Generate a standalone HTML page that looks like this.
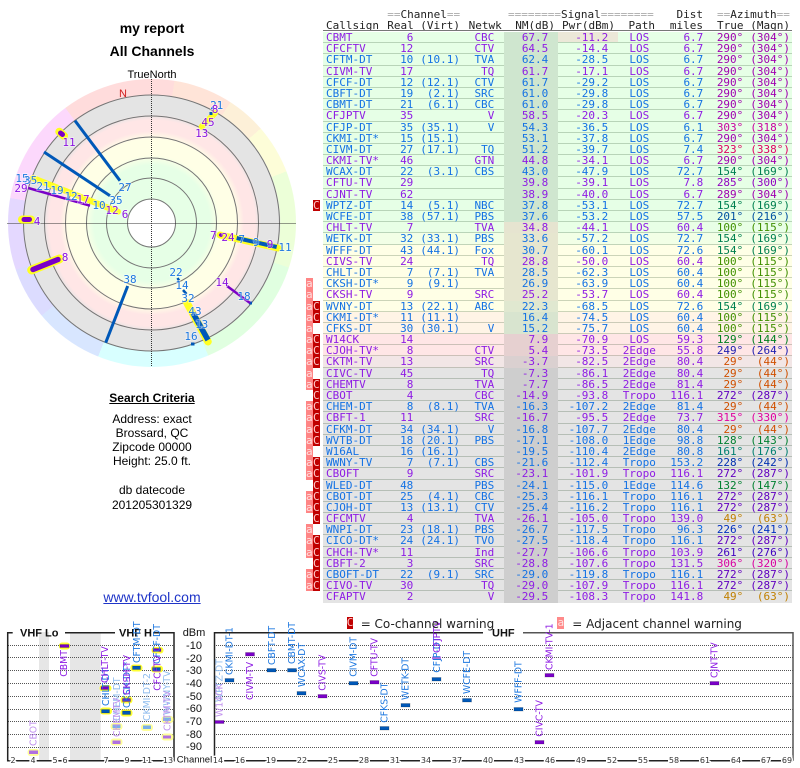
<!DOCTYPE html>
<html><head><meta charset="utf-8"><title>my report</title>
<style>
html,body{margin:0;padding:0;background:#fff}
body{position:relative;width:800px;height:768px;overflow:hidden;font-family:"Liberation Sans",sans-serif}
.t{position:absolute;left:0;width:304px;text-align:center;color:#000}
#disc{position:absolute;left:7.5px;top:79px;width:288px;height:288px;border-radius:50%;
background:radial-gradient(circle at center,#fff 0,#fff 23.5px,#e6ffe6 24px,#e6ffe6 58px,#ffffe6 68px,#ffffe6 84px,#ffe6e6 92px,#ffe6e6 103px,#e4e4e4 109px,#e4e4e4 128px,rgba(255,255,255,0) 128.5px),
conic-gradient(#ffdcdc 0 9deg,#ffe4d8 9deg 33deg,#fdf0d8 33deg 49deg,#fdfdd8 49deg 69deg,#ecffd8 69deg 108deg,#e0ffe0 108deg 157deg,#d8ffff 157deg 202deg,#d8e6ff 202deg 230deg,#dcdcff 230deg 251deg,#e4d8ff 251deg 280deg,#fcd8fc 280deg 323deg,#ffdcdc 323deg)}
svg{position:absolute;left:0;top:0}
.sf{filter:blur(.3px)}
.h{position:absolute;font:11px/11px "DejaVu Sans Mono",monospace;color:#222;white-space:pre;filter:blur(.25px)}
.h em{font-style:normal;color:#aaa}
#hl{position:absolute;left:323px;width:469px;top:30px;height:1px;background:#777}
#tb{position:absolute;left:323px;top:32px;width:469px;font:11px/11px "DejaVu Sans Mono",monospace;filter:blur(.25px)}
.r{position:relative;height:11.2px;box-sizing:border-box;background:var(--b);border-bottom:1px solid rgba(0,40,0,.2);color:#1472e4}
.r.p{color:#8e1ce4}
.r::before{content:"";position:absolute;left:181px;width:54px;top:0;height:11.2px;background:var(--n)}
.r i{position:absolute;top:0;font-style:normal;white-space:pre}
.r i:nth-of-type(1){left:3px}
.r i:nth-of-type(2){right:378.7px}
.r i:nth-of-type(3){right:332px}
.r i:nth-of-type(4){right:297.7px}
.r i:nth-of-type(5){right:243.7px}
.r i:nth-of-type(6){right:183.7px}
.r i:nth-of-type(7){left:286.3px;width:60px;text-align:center}
.r i:nth-of-type(8){right:88.7px}
.r i:nth-of-type(9){right:48.7px;color:var(--a)}
.r i:nth-of-type(10){right:2px;color:var(--a)}
.r u,.r b{position:absolute;top:0;height:11.2px;text-decoration:none;font-weight:normal;text-align:center;overflow:hidden}
.r u{left:-17px;width:6.7px;background:#ff8585;color:#ffe0e0}
.r b{left:-10.3px;width:7.3px;background:#c00000;color:#ffc8c8}
.g{--b:#e6ffe6;--n:#cfe6cf}
.h1{--b:#e8ffe6;--n:#e6e4d0}
.h2{--b:#f2ffe6;--n:#e6e6cf}
.y{--b:#ffffe6;--n:#e6e6cf}
.y2{--b:#ffffe6;--n:#e0e8d0}
.o{--b:#fff4e6;--n:#d8e4cf}
.k{--b:#ffe6e6;--n:#e6d0d0}
.m{--b:#f2e6e6;--n:#dad0d0}
.e{--b:#e4e4e4;--n:#cecece}
#leg{position:absolute;top:617px;left:0;width:800px;height:14px;font:12px/14px "DejaVu Sans",sans-serif;color:#222;filter:blur(.2px)}
#leg span{position:absolute;white-space:pre}
#leg .x{top:0;height:12px;font:11px/12px "DejaVu Sans Mono",monospace;text-align:center}
</style></head><body>

<div class="t" style="top:20px;font:bold 14px/16px 'Liberation Sans',sans-serif">my report</div>
<div class="t" style="top:43px;font:bold 14px/16px 'Liberation Sans',sans-serif">All Channels</div>
<div class="t" style="top:69px;font:11px/13px 'Liberation Sans',sans-serif">TrueNorth</div>
<div id="disc"></div>

<svg width="800" height="768" viewBox="0 0 800 768" xmlns="http://www.w3.org/2000/svg">
<g fill="none" stroke="#757575" stroke-width="1">
<circle cx="151.5" cy="223" r="24"/><circle cx="151.5" cy="223" r="45"/><circle cx="151.5" cy="223" r="65"/><circle cx="151.5" cy="223" r="86"/><circle cx="151.5" cy="223" r="107"/><circle cx="151.5" cy="223" r="128"/>
</g>
<g stroke="#333" stroke-width="1" stroke-dasharray="1 1">
<line x1="7.5" y1="223.5" x2="296" y2="223.5"/><line x1="151.5" y1="79" x2="151.5" y2="367"/>
</g>
<text x="123" y="97" font-family="Liberation Sans" font-size="11" fill="#d02020" text-anchor="middle">N</text>
<g stroke-linecap="round" fill="none">
<line x1="33" y1="178" x2="118" y2="211.7" stroke="#ffff22" stroke-width="6"/>
<line x1="201.7" y1="126.7" x2="215" y2="113" stroke="#ffff22" stroke-width="6"/>
<line x1="220" y1="235" x2="278" y2="248" stroke="#ffff22" stroke-width="7"/>
<line x1="187" y1="303" x2="208" y2="341.7" stroke="#ffff22" stroke-width="7.5"/>
<line x1="59.3" y1="131.7" x2="64" y2="136" stroke="#ffff22" stroke-width="8"/>
<line x1="31.7" y1="270" x2="59.3" y2="259" stroke="#ffff22" stroke-width="9"/>
<line x1="22" y1="219.5" x2="31" y2="219.5" stroke="#ffff22" stroke-width="8"/>
<g stroke="#0058b8" stroke-linecap="butt">
<line x1="75" y1="120.7" x2="120" y2="180.7" stroke-width="3"/>
<line x1="44" y1="152" x2="110" y2="195.7" stroke-width="3"/>
<line x1="127.7" y1="286" x2="105.7" y2="342.7" stroke-width="3"/>
<line x1="236.7" y1="238" x2="276.7" y2="247" stroke-width="4"/>
<line x1="193" y1="313" x2="208" y2="340" stroke-width="5.5"/>
<line x1="177.5" y1="278" x2="179" y2="280.5" stroke-width="2.5"/>
<line x1="183" y1="290" x2="186.5" y2="294" stroke-width="2.5"/>
<line x1="209.5" y1="113.5" x2="212.5" y2="113.5" stroke-width="3"/>
<line x1="191" y1="344" x2="194.5" y2="344" stroke-width="3"/>
<line x1="249" y1="303" x2="252" y2="303" stroke-width="3"/>
</g>
<g stroke="#7a00c8" stroke-linecap="butt">
<line x1="28.3" y1="188" x2="90" y2="205.7" stroke-width="2.5"/>
<line x1="227" y1="286" x2="250" y2="303" stroke-width="2.5"/>
</g>
<g stroke="#7a00c8">
<line x1="60.5" y1="133" x2="62.5" y2="134.5" stroke-width="5"/>
<line x1="33" y1="269.5" x2="58" y2="259.5" stroke-width="5.5"/>
<line x1="24" y1="219.5" x2="29.5" y2="219.5" stroke-width="5"/>
<line x1="220.7" y1="235" x2="221" y2="235.2" stroke-width="3.5"/>
</g>
</g>
<g class="sf" font-family="DejaVu Sans Mono" font-size="11" text-anchor="middle" paint-order="stroke" stroke="#fff" stroke-opacity=".5" stroke-width="1.5" fill="#1e78e0">
<text x="125" y="191">27</text><text x="116" y="204">35</text>
<text x="22" y="182">15</text><text x="30.6" y="184">35</text><text x="43" y="190">21</text><text x="57" y="194">19</text><text x="71" y="200">12</text><text x="99" y="209">10</text>
<text x="216.7" y="109">21</text>
<text x="130" y="283">38</text>
<text x="241.7" y="243">7</text><text x="256" y="246">9</text><text x="285" y="251">11</text>
<text x="176" y="276">22</text><text x="182" y="289">14</text><text x="188" y="302">32</text><text x="195" y="315">43</text><text x="201.7" y="328">13</text>
<text x="244" y="300">18</text><text x="191" y="340">16</text>
</g>
<g class="sf" font-family="DejaVu Sans Mono" font-size="11" text-anchor="middle" paint-order="stroke" stroke="#fff" stroke-opacity=".5" stroke-width="1.5" fill="#8a14e0">
<text x="69" y="146">11</text><text x="21" y="192">29</text><text x="83" y="203">17</text><text x="112" y="214">12</text><text x="125" y="218">6</text><text x="37" y="225">4</text>
<text x="215" y="113">8</text><text x="208" y="126">45</text><text x="201.7" y="137">13</text>
<text x="65" y="261">8</text>
<text x="213.3" y="239">7</text><text x="228" y="241">24</text><text x="270" y="248">9</text>
<text x="222" y="286">14</text>
</g>

<!-- bottom charts -->
<rect x="39" y="632" width="10" height="128" fill="#e6e6e6"/>
<rect x="70" y="632" width="30.7" height="128" fill="#e6e6e6"/>
<g stroke="#555" stroke-width="1" stroke-dasharray="1 1">
<line x1="8" x2="174" y1="645.5" y2="645.5"/><line x1="8" x2="174" y1="657.5" y2="657.5"/><line x1="8" x2="174" y1="670.5" y2="670.5"/><line x1="8" x2="174" y1="683.5" y2="683.5"/><line x1="8" x2="174" y1="696.5" y2="696.5"/><line x1="8" x2="174" y1="709.5" y2="709.5"/><line x1="8" x2="174" y1="721.5" y2="721.5"/><line x1="8" x2="174" y1="734.5" y2="734.5"/><line x1="8" x2="174" y1="747.5" y2="747.5"/>
<line x1="214" x2="793" y1="645.5" y2="645.5"/><line x1="214" x2="793" y1="657.5" y2="657.5"/><line x1="214" x2="793" y1="670.5" y2="670.5"/><line x1="214" x2="793" y1="683.5" y2="683.5"/><line x1="214" x2="793" y1="696.5" y2="696.5"/><line x1="214" x2="793" y1="709.5" y2="709.5"/><line x1="214" x2="793" y1="721.5" y2="721.5"/><line x1="214" x2="793" y1="734.5" y2="734.5"/><line x1="214" x2="793" y1="747.5" y2="747.5"/>
</g>
<g stroke="#222" stroke-width="1.5" fill="none">
<path d="M12.7 632.7H7.7V760.7H174V632.7H153"/>
<path d="M65 632.7H115"/>
<path d="M483 632.7H214.5V760.7H793"/>
<path d="M523 632.7H793V760.7" stroke="#555"/>
</g>
<g font-family="Liberation Sans" font-size="11" font-weight="bold" fill="#111">
<text x="20" y="636.5">VHF Lo</text><text x="119" y="636.5">VHF H</text><text x="492" y="636.5">UHF</text>
</g>
<g font-family="Liberation Sans" font-size="11" fill="#111" text-anchor="middle">
<text x="194" y="636">dBm</text>
<text x="194" y="649">-10</text><text x="194" y="662">-20</text><text x="194" y="674">-30</text><text x="194" y="687">-40</text><text x="194" y="700">-50</text><text x="194" y="712">-60</text><text x="194" y="725">-70</text><text x="194" y="738">-80</text><text x="194" y="750">-90</text>
<text x="194.5" y="762.5" font-size="9.5">Channel</text>
</g>
<g font-family="DejaVu Sans" font-size="8" fill="#333" text-anchor="middle" paint-order="stroke" stroke="#fff" stroke-width="3">
<text x="13" y="763">2</text><text x="33" y="763">4</text><text x="55" y="763">5</text><text x="65" y="763">6</text><text x="106" y="763">7</text><text x="127" y="763">9</text><text x="147" y="763">11</text><text x="168" y="763">13</text>
<text x="218" y="763">14</text><text x="240" y="763">16</text><text x="271" y="763">19</text><text x="302" y="763">22</text><text x="333" y="763">25</text><text x="364" y="763">28</text><text x="395" y="763">31</text><text x="426" y="763">34</text><text x="457" y="763">37</text><text x="488" y="763">40</text><text x="519" y="763">43</text><text x="550" y="763">46</text><text x="581" y="763">49</text><text x="612" y="763">52</text><text x="643" y="763">55</text><text x="674" y="763">58</text><text x="705" y="763">61</text><text x="736" y="763">64</text><text x="766" y="763">67</text><text x="787" y="763">69</text>
</g>
<!-- halos -->
<g fill="#ffff33">
<rect x="100" y="707.5" width="12" height="7" rx="3"/>
<rect x="59" y="642.5" width="11" height="7" rx="3"/>
<rect x="99.5" y="685" width="12" height="6.5" rx="3"/>
<rect x="120.5" y="696.5" width="12" height="7" rx="3"/>
<rect x="120.5" y="709.5" width="12" height="7" rx="3"/>
<rect x="130.5" y="664.5" width="12" height="7" rx="3"/>
<rect x="151" y="665.5" width="12" height="7" rx="3"/>
<rect x="151.5" y="647" width="12" height="6.5" rx="3"/>
</g>
<g fill="#ffff99">
<rect x="27.5" y="749" width="12" height="7" rx="3"/>
<rect x="110.5" y="723" width="12" height="7" rx="3"/>
<rect x="110.5" y="738.5" width="12" height="7" rx="3"/>
<rect x="141" y="724" width="12" height="7" rx="3"/>
<rect x="161.5" y="716" width="12" height="7" rx="3"/>
<rect x="161.5" y="733.5" width="12" height="7" rx="3"/>
</g>
<!-- markers -->
<g fill="#0058b8" stroke="rgba(0,0,0,.18)" stroke-width="1">
<rect x="101.5" y="709.5" width="8" height="3.5"/><rect x="122.5" y="711" width="8" height="3.5"/><rect x="132.5" y="666" width="8" height="3.5"/><rect x="152.5" y="667.5" width="8" height="3.5"/>
<rect x="225" y="678.5" width="9" height="3.5"/><rect x="267" y="668.5" width="9" height="3.5"/><rect x="287.5" y="668.5" width="9" height="3.5"/><rect x="297" y="691.5" width="9" height="3.5"/><rect x="349" y="681.5" width="9" height="3.5"/><rect x="380" y="726.5" width="9" height="3.5"/><rect x="401" y="703.5" width="9" height="3.5"/><rect x="432" y="677.5" width="9" height="3.5"/><rect x="462.5" y="698.5" width="9" height="3.5"/><rect x="514" y="707.5" width="9" height="3.5"/>
</g>
<g fill="#7a00c8" stroke="rgba(0,0,0,.18)" stroke-width="1">
<rect x="60" y="644.5" width="9" height="3"/><rect x="101" y="686.5" width="8" height="3"/><rect x="122.5" y="698.5" width="8" height="3"/><rect x="153" y="648.5" width="8" height="3"/>
<rect x="215" y="720.5" width="9" height="3"/><rect x="245.5" y="652.5" width="9" height="3.5"/><rect x="318" y="694.5" width="9" height="3.5"/><rect x="370" y="680.5" width="9" height="3.5"/><rect x="535" y="740.5" width="9" height="3.5"/><rect x="545" y="673.5" width="9" height="3.5"/><rect x="710" y="681.5" width="9" height="3.5"/>
</g>
<g fill="#7ab0e8">
<rect x="112.5" y="724.5" width="8" height="3.5"/><rect x="143" y="725.5" width="8" height="3.5"/><rect x="163" y="717.5" width="8" height="3.5"/>
</g>
<g fill="#b070e0">
<rect x="29" y="750.5" width="9" height="3.5"/><rect x="112.5" y="740.5" width="8" height="3.5"/><rect x="163" y="735.5" width="8" height="3"/><rect x="432" y="656.5" width="9" height="3"/>
</g>
<!-- rotated labels -->
<g class="sf" font-family="DejaVu Sans" font-size="9.3" fill="#1e78e0">
<text transform="translate(109,706) rotate(-90)">CHLT-DT</text>
<text transform="translate(130,708) rotate(-90)">CKSH-DT*</text>
<text transform="translate(140,663) rotate(-90)">CFTM-DT</text>
<text transform="translate(160,664) rotate(-90)">CFCF-DT</text>
<text transform="translate(232.5,675) rotate(-90)">CKMI-DT-1</text>
<text transform="translate(275,665) rotate(-90)">CBFT-DT</text>
<text transform="translate(295,664) rotate(-90)">CBMT-DT</text>
<text transform="translate(305,687) rotate(-90)">WCAX-DT</text>
<text transform="translate(356.5,676.7) rotate(-90)">CIVM-DT</text>
<text transform="translate(387.5,722.7) rotate(-90)">CFKS-DT</text>
<text transform="translate(408.5,700) rotate(-90)">WETK-DT</text>
<text transform="translate(440,672.7) rotate(-90)">CFJP-DT</text>
<text transform="translate(470,694) rotate(-90)">WCFE-DT</text>
<text transform="translate(521.5,702.7) rotate(-90)">WFFF-DT</text>
</g>
<g class="sf" font-family="DejaVu Sans" font-size="9.3" fill="#8e1ce4">
<text transform="translate(67,676.7) rotate(-90)">CBMT</text>
<text transform="translate(108,683) rotate(-90)">CHLT-TV</text>
<text transform="translate(130,695) rotate(-90)">CKSH-TV</text>
<text transform="translate(160.5,690.7) rotate(-90)">CFCFTV</text>
<text transform="translate(253,700) rotate(-90)">CIVM-TV</text>
<text transform="translate(325.5,690.7) rotate(-90)">CIVS-TV</text>
<text transform="translate(377.5,676.7) rotate(-90)">CFTU-TV</text>
<text transform="translate(440,653) rotate(-90)">CFJPTV</text>
<text transform="translate(542.5,736.7) rotate(-90)">CIVC-TV</text>
<text transform="translate(552.5,670) rotate(-90)">CKMI-TV-1</text>
<text transform="translate(717.5,678) rotate(-90)">CJNT-TV</text>
</g>
<g class="sf" font-family="DejaVu Sans" font-size="9.3" fill="#8fbcee">
<text transform="translate(120,721) rotate(-90)">CHEM-DT</text>
<text transform="translate(150,721) rotate(-90)">CKMI-DT-2</text>
<text transform="translate(170,715) rotate(-90)">WWNY-TV</text>
<text transform="translate(222.5,702) rotate(-90)">WPTZ-DT</text>
</g>
<g class="sf" font-family="DejaVu Sans" font-size="9.3" fill="#c090ee">
<text transform="translate(36.5,746) rotate(-90)">CBOT</text>
<text transform="translate(120,737) rotate(-90)">CHEMTV</text>
<text transform="translate(170.5,731) rotate(-90)">CKTM-TV</text>
<text transform="translate(222.5,717) rotate(-90)">W14CK</text>
</g>
</svg>

<div class="t" style="top:391px;font:bold 12px/14px 'Liberation Sans',sans-serif;text-decoration:underline">Search Criteria</div>
<div class="t" style="top:412px;font:12px/14px 'Liberation Sans',sans-serif">Address: exact</div>
<div class="t" style="top:426px;font:12px/14px 'Liberation Sans',sans-serif">Brossard, QC</div>
<div class="t" style="top:440px;font:12px/14px 'Liberation Sans',sans-serif">Zipcode 00000</div>
<div class="t" style="top:454px;font:12px/14px 'Liberation Sans',sans-serif">Height: 25.0 ft.</div>
<div class="t" style="top:483px;font:12px/14px 'Liberation Sans',sans-serif">db datecode</div>
<div class="t" style="top:498px;font:12px/14px 'Liberation Sans',sans-serif">201205301329</div>
<div class="t" style="top:589px;font:14px/16px 'Liberation Sans',sans-serif;color:#1f35c8;text-decoration:underline">www.tvfool.com</div>

<div class="h" style="left:387.3px;top:9px"><em>==</em>Channel<em>==</em></div>
<div class="h" style="left:508px;top:9px"><em>========</em>Signal<em>========</em></div>
<div class="h" style="right:97px;top:9px">Dist</div>
<div class="h" style="left:717px;top:9px"><em>==</em>Azimuth<em>==</em></div>
<div class="h" style="left:326px;top:20px">Callsign</div>
<div class="h" style="left:387.3px;top:20px">Real</div>
<div class="h" style="right:340px;top:20px">(Virt)</div>
<div class="h" style="right:298.3px;top:20px">Netwk</div>
<div class="h" style="right:245px;top:20px">NM(dB)</div>
<div class="h" style="right:185px;top:20px">Pwr(dBm)</div>
<div class="h" style="right:145px;top:20px">Path</div>
<div class="h" style="right:97px;top:20px">miles</div>
<div class="h" style="left:717px;top:20px">True</div>
<div class="h" style="right:10px;top:20px">(Magn)</div>
<div id="hl"></div>

<div id="tb">
<div class="r g p" style="--a:#a000b0"><i>CBMT</i><i>6</i><i></i><i>CBC</i><i>67.7</i><i style="background:#ece8d8;padding:0 9.7px 0 17.3px;right:174px;height:10px">-11.2</i><i>LOS</i><i>6.7</i><i>290°</i><i>(304°)</i></div>
<div class="r g p" style="--a:#a000b0"><i>CFCFTV</i><i>12</i><i></i><i>CTV</i><i>64.5</i><i>-14.4</i><i>LOS</i><i>6.7</i><i>290°</i><i>(304°)</i></div>
<div class="r g" style="--a:#a000b0"><i>CFTM-DT</i><i>10</i><i>(10.1)</i><i>TVA</i><i>62.4</i><i>-28.5</i><i>LOS</i><i>6.7</i><i>290°</i><i>(304°)</i></div>
<div class="r g p" style="--a:#a000b0"><i>CIVM-TV</i><i>17</i><i></i><i>TQ</i><i>61.7</i><i>-17.1</i><i>LOS</i><i>6.7</i><i>290°</i><i>(304°)</i></div>
<div class="r g" style="--a:#a000b0"><i>CFCF-DT</i><i>12</i><i>(12.1)</i><i>CTV</i><i>61.7</i><i>-29.2</i><i>LOS</i><i>6.7</i><i>290°</i><i>(304°)</i></div>
<div class="r g" style="--a:#a000b0"><i>CBFT-DT</i><i>19</i><i>(2.1)</i><i>SRC</i><i>61.0</i><i>-29.8</i><i>LOS</i><i>6.7</i><i>290°</i><i>(304°)</i></div>
<div class="r g" style="--a:#a000b0"><i>CBMT-DT</i><i>21</i><i>(6.1)</i><i>CBC</i><i>61.0</i><i>-29.8</i><i>LOS</i><i>6.7</i><i>290°</i><i>(304°)</i></div>
<div class="r g p" style="--a:#a000b0"><i>CFJPTV</i><i>35</i><i></i><i>V</i><i>58.5</i><i>-20.3</i><i>LOS</i><i>6.7</i><i>290°</i><i>(304°)</i></div>
<div class="r g" style="--a:#c800a0"><i>CFJP-DT</i><i>35</i><i>(35.1)</i><i>V</i><i>54.3</i><i>-36.5</i><i>LOS</i><i>6.1</i><i>303°</i><i>(318°)</i></div>
<div class="r g" style="--a:#a000b0"><i>CKMI-DT*</i><i>15</i><i>(15.1)</i><i></i><i>53.1</i><i>-37.8</i><i>LOS</i><i>6.7</i><i>290°</i><i>(304°)</i></div>
<div class="r g" style="--a:#e00060"><i>CIVM-DT</i><i>27</i><i>(17.1)</i><i>TQ</i><i>51.2</i><i>-39.7</i><i>LOS</i><i>7.4</i><i>323°</i><i>(338°)</i></div>
<div class="r g p" style="--a:#a000b0"><i>CKMI-TV*</i><i>46</i><i></i><i>GTN</i><i>44.8</i><i>-34.1</i><i>LOS</i><i>6.7</i><i>290°</i><i>(304°)</i></div>
<div class="r g" style="--a:#008050"><i>WCAX-DT</i><i>22</i><i>(3.1)</i><i>CBS</i><i>43.0</i><i>-47.9</i><i>LOS</i><i>72.7</i><i>154°</i><i>(169°)</i></div>
<div class="r g p" style="--a:#9000c0"><i>CFTU-TV</i><i>29</i><i></i><i></i><i>39.8</i><i>-39.1</i><i>LOS</i><i>7.8</i><i>285°</i><i>(300°)</i></div>
<div class="r g p" style="--a:#a000b0"><i>CJNT-TV</i><i>62</i><i></i><i></i><i>38.9</i><i>-40.0</i><i>LOS</i><i>6.7</i><i>289°</i><i>(304°)</i></div>
<div class="r g" style="--a:#008050"><i>WPTZ-DT</i><i>14</i><i>(5.1)</i><i>NBC</i><i>37.8</i><i>-53.1</i><i>LOS</i><i>72.7</i><i>154°</i><i>(169°)</i><b>C</b></div>
<div class="r g" style="--a:#0050a0"><i>WCFE-DT</i><i>38</i><i>(57.1)</i><i>PBS</i><i>37.6</i><i>-53.2</i><i>LOS</i><i>57.5</i><i>201°</i><i>(216°)</i></div>
<div class="r h1 p" style="--a:#409000"><i>CHLT-TV</i><i>7</i><i></i><i>TVA</i><i>34.8</i><i>-44.1</i><i>LOS</i><i>60.4</i><i>100°</i><i>(115°)</i></div>
<div class="r h2" style="--a:#008050"><i>WETK-DT</i><i>32</i><i>(33.1)</i><i>PBS</i><i>33.6</i><i>-57.2</i><i>LOS</i><i>72.7</i><i>154°</i><i>(169°)</i></div>
<div class="r y" style="--a:#008050"><i>WFFF-DT</i><i>43</i><i>(44.1)</i><i>Fox</i><i>30.7</i><i>-60.1</i><i>LOS</i><i>72.6</i><i>154°</i><i>(169°)</i></div>
<div class="r y p" style="--a:#409000"><i>CIVS-TV</i><i>24</i><i></i><i>TQ</i><i>28.8</i><i>-50.0</i><i>LOS</i><i>60.4</i><i>100°</i><i>(115°)</i></div>
<div class="r y" style="--a:#409000"><i>CHLT-DT</i><i>7</i><i>(7.1)</i><i>TVA</i><i>28.5</i><i>-62.3</i><i>LOS</i><i>60.4</i><i>100°</i><i>(115°)</i></div>
<div class="r y" style="--a:#409000"><i>CKSH-DT*</i><i>9</i><i>(9.1)</i><i></i><i>26.9</i><i>-63.9</i><i>LOS</i><i>60.4</i><i>100°</i><i>(115°)</i><u>a</u></div>
<div class="r y p" style="--a:#409000"><i>CKSH-TV</i><i>9</i><i></i><i>SRC</i><i>25.2</i><i>-53.7</i><i>LOS</i><i>60.4</i><i>100°</i><i>(115°)</i><u>a</u></div>
<div class="r y2" style="--a:#008050"><i>WVNY-DT</i><i>13</i><i>(22.1)</i><i>ABC</i><i>22.3</i><i>-68.5</i><i>LOS</i><i>72.6</i><i>154°</i><i>(169°)</i><u>a</u><b>C</b></div>
<div class="r o" style="--a:#409000"><i>CKMI-DT*</i><i>11</i><i>(11.1)</i><i></i><i>16.4</i><i>-74.5</i><i>LOS</i><i>60.4</i><i>100°</i><i>(115°)</i><u>a</u><b>C</b></div>
<div class="r o" style="--a:#409000"><i>CFKS-DT</i><i>30</i><i>(30.1)</i><i>V</i><i>15.2</i><i>-75.7</i><i>LOS</i><i>60.4</i><i>100°</i><i>(115°)</i><u>a</u></div>
<div class="r k p" style="--a:#008020"><i>W14CK</i><i>14</i><i></i><i></i><i>7.9</i><i>-70.9</i><i>LOS</i><i>59.3</i><i>129°</i><i>(144°)</i><u>a</u><b>C</b></div>
<div class="r k p" style="--a:#2020b0"><i>CJOH-TV*</i><i>8</i><i></i><i>CTV</i><i>5.4</i><i>-73.5</i><i>2Edge</i><i>55.8</i><i>249°</i><i>(264°)</i><u>a</u><b>C</b></div>
<div class="r m p" style="--a:#d05000"><i>CKTM-TV</i><i>13</i><i></i><i>SRC</i><i>-3.7</i><i>-82.5</i><i>2Edge</i><i>80.4</i><i>29°</i><i>(44°)</i><u>a</u><b>C</b></div>
<div class="r e p" style="--a:#d05000"><i>CIVC-TV</i><i>45</i><i></i><i>TQ</i><i>-7.3</i><i>-86.1</i><i>2Edge</i><i>80.4</i><i>29°</i><i>(44°)</i><u>a</u></div>
<div class="r e p" style="--a:#d05000"><i>CHEMTV</i><i>8</i><i></i><i>TVA</i><i>-7.7</i><i>-86.5</i><i>2Edge</i><i>81.4</i><i>29°</i><i>(44°)</i><u>a</u><b>C</b></div>
<div class="r e p" style="--a:#6000c0"><i>CBOT</i><i>4</i><i></i><i>CBC</i><i>-14.9</i><i>-93.8</i><i>Tropo</i><i>116.1</i><i>272°</i><i>(287°)</i><b>C</b></div>
<div class="r e" style="--a:#d05000"><i>CHEM-DT</i><i>8</i><i>(8.1)</i><i>TVA</i><i>-16.3</i><i>-107.2</i><i>2Edge</i><i>81.4</i><i>29°</i><i>(44°)</i><u>a</u><b>C</b></div>
<div class="r e p" style="--a:#e000a0"><i>CBFT-1</i><i>11</i><i></i><i>SRC</i><i>-16.7</i><i>-95.5</i><i>2Edge</i><i>73.7</i><i>315°</i><i>(330°)</i><u>a</u><b>C</b></div>
<div class="r e" style="--a:#d05000"><i>CFKM-DT</i><i>34</i><i>(34.1)</i><i>V</i><i>-16.8</i><i>-107.7</i><i>2Edge</i><i>80.4</i><i>29°</i><i>(44°)</i><u>a</u><b>C</b></div>
<div class="r e" style="--a:#008030"><i>WVTB-DT</i><i>18</i><i>(20.1)</i><i>PBS</i><i>-17.1</i><i>-108.0</i><i>1Edge</i><i>98.8</i><i>128°</i><i>(143°)</i><u>a</u><b>C</b></div>
<div class="r e" style="--a:#008070"><i>W16AL</i><i>16</i><i>(16.1)</i><i></i><i>-19.5</i><i>-110.4</i><i>2Edge</i><i>80.8</i><i>161°</i><i>(176°)</i><u>a</u></div>
<div class="r e" style="--a:#0030b0"><i>WWNY-TV</i><i>7</i><i>(7.1)</i><i>CBS</i><i>-21.6</i><i>-112.4</i><i>Tropo</i><i>153.2</i><i>228°</i><i>(242°)</i><u>a</u><b>C</b></div>
<div class="r e p" style="--a:#6000c0"><i>CBOFT</i><i>9</i><i></i><i>SRC</i><i>-23.1</i><i>-101.9</i><i>Tropo</i><i>116.1</i><i>272°</i><i>(287°)</i><u>a</u><b>C</b></div>
<div class="r e" style="--a:#008030"><i>WLED-DT</i><i>48</i><i></i><i>PBS</i><i>-24.1</i><i>-115.0</i><i>1Edge</i><i>114.6</i><i>132°</i><i>(147°)</i><b>C</b></div>
<div class="r e" style="--a:#6000c0"><i>CBOT-DT</i><i>25</i><i>(4.1)</i><i>CBC</i><i>-25.3</i><i>-116.1</i><i>Tropo</i><i>116.1</i><i>272°</i><i>(287°)</i><u>a</u><b>C</b></div>
<div class="r e" style="--a:#6000c0"><i>CJOH-DT</i><i>13</i><i>(13.1)</i><i>CTV</i><i>-25.4</i><i>-116.2</i><i>Tropo</i><i>116.1</i><i>272°</i><i>(287°)</i><u>a</u><b>C</b></div>
<div class="r e p" style="--a:#c08000"><i>CFCMTV</i><i>4</i><i></i><i>TVA</i><i>-26.1</i><i>-105.0</i><i>Tropo</i><i>139.0</i><i>49°</i><i>(63°)</i><b>C</b></div>
<div class="r e" style="--a:#0030c0"><i>WNPI-DT</i><i>23</i><i>(18.1)</i><i>PBS</i><i>-26.7</i><i>-117.5</i><i>Tropo</i><i>96.3</i><i>226°</i><i>(241°)</i><u>a</u></div>
<div class="r e" style="--a:#6000c0"><i>CICO-DT*</i><i>24</i><i>(24.1)</i><i>TVO</i><i>-27.5</i><i>-118.4</i><i>Tropo</i><i>116.1</i><i>272°</i><i>(287°)</i><u>a</u><b>C</b></div>
<div class="r e p" style="--a:#4000c0"><i>CHCH-TV*</i><i>11</i><i></i><i>Ind</i><i>-27.7</i><i>-106.6</i><i>Tropo</i><i>103.9</i><i>261°</i><i>(276°)</i><u>a</u><b>C</b></div>
<div class="r e p" style="--a:#d800a0"><i>CBFT-2</i><i>3</i><i></i><i>SRC</i><i>-28.8</i><i>-107.6</i><i>Tropo</i><i>131.5</i><i>306°</i><i>(320°)</i><b>C</b></div>
<div class="r e" style="--a:#6000c0"><i>CBOFT-DT</i><i>22</i><i>(9.1)</i><i>SRC</i><i>-29.0</i><i>-119.8</i><i>Tropo</i><i>116.1</i><i>272°</i><i>(287°)</i><u>a</u><b>C</b></div>
<div class="r e p" style="--a:#6000c0"><i>CIVO-TV</i><i>30</i><i></i><i>TQ</i><i>-29.0</i><i>-107.9</i><i>Tropo</i><i>116.1</i><i>272°</i><i>(287°)</i><u>a</u><b>C</b></div>
<div class="r e p" style="--a:#c08000;border-bottom:none"><i>CFAPTV</i><i>2</i><i></i><i>V</i><i>-29.5</i><i>-108.3</i><i>Tropo</i><i>141.8</i><i>49°</i><i>(63°)</i></div>
</div>

<div id="leg">
<span class="x" style="left:346.7px;width:6.5px;background:#c00000;color:#ffc8c8">C</span>
<span style="left:360.7px;top:0">= Co-channel warning</span>
<span class="x" style="left:557.3px;width:7px;background:#ff8a8a;color:#ffe0e0">a</span>
<span style="left:572.3px;top:0">= Adjacent channel warning</span>
</div>
</body></html>
